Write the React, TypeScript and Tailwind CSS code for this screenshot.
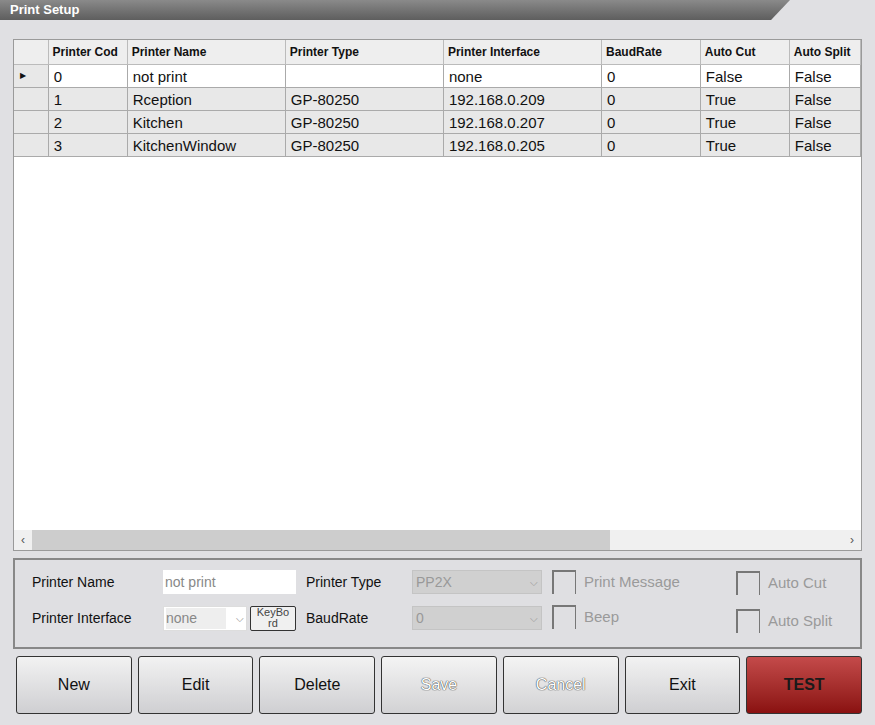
import React from "react";

const cols = [
  { w: "w-[80px]", label: "Printer Cod" },
  { w: "w-[160px]", label: "Printer Name" },
  { w: "w-[160px]", label: "Printer Type" },
  { w: "w-[160px]", label: "Printer Interface" },
  { w: "w-[100px]", label: "BaudRate" },
  { w: "w-[90px]", label: "Auto Cut" },
  { w: "w-[72px]", label: "Auto Split" },
];

const rows = [
  ["0", "not print", "", "none", "0", "False", "False"],
  ["1", "Rception", "GP-80250", "192.168.0.209", "0", "True", "False"],
  ["2", "Kitchen", "GP-80250", "192.168.0.207", "0", "True", "False"],
  ["3", "KitchenWindow", "GP-80250", "192.168.0.205", "0", "True", "False"],
];

function Btn({ label, kind }: { label: string; kind?: "light" | "red" }) {
  const base =
    "h-[58px] flex-1 rounded-[3px] border border-[#333] flex items-center justify-center text-[16px]";
  if (kind === "red")
    return (
      <div className={`${base} bg-gradient-to-b from-[#c44a4a] to-[#8a1010] font-bold text-[#1a1a1a]`}>
        {label}
      </div>
    );
  if (kind === "light")
    return (
      <div
        className={`${base} bg-gradient-to-b from-[#f4f4f4] to-[#d2d2d4] text-white [text-shadow:0_0_1px_#333,0_0_1px_#333]`}
      >
        {label}
      </div>
    );
  return (
    <div className={`${base} bg-gradient-to-b from-[#f2f2f2] to-[#cfcfd2] text-[#111]`}>{label}</div>
  );
}

function Check({ label }: { label: string }) {
  return (
    <div className="flex items-center gap-2">
      <div className="h-[24px] w-[24px] border-l-2 border-t-2 border-r border-[#777]" />
      <span className="text-[15px] text-[#9a9a9a]">{label}</span>
    </div>
  );
}

export default function App() {
  return (
    <div
      className="w-[875px] h-[725px] bg-[#e0e0e3] flex flex-col overflow-hidden"
      style={{ fontFamily: '"Liberation Sans", Arial, sans-serif' }}
    >
      {/* title */}
      <div className="relative h-[20px] shrink-0">
        <div className="h-[20px] w-[790px] bg-gradient-to-b from-[#8a8a8a] to-[#5e5e5e] [clip-path:polygon(0_0,100%_0,97.6%_100%,0_100%)] pl-[10px] text-[13px] font-bold text-white leading-[20px]">
          Print Setup
        </div>
      </div>
      <div className="flex-1 flex flex-col px-[13px] pt-[19px] gap-[7px]">
        {/* grid */}
        <div className="h-[512px] bg-white border border-[#9a9a9a] flex flex-col text-[15px] text-[#111]">
          <div className="flex h-[25px] bg-[#eeeeee] border-b border-[#bbb] text-[12px] font-bold">
            <div className="w-[35px] border-r border-[#bbb]" />
            {cols.map((c) => (
              <div key={c.label} className={`${c.w} border-r border-[#bbb] px-[4px] pt-[3px] whitespace-nowrap overflow-hidden`}>
                {c.label}
              </div>
            ))}
          </div>
          {rows.map((r, i) => (
            <div key={i} className={`flex h-[23px] border-b border-[#aaa] ${i === 0 ? "bg-white" : "bg-[#e8e8e8]"}`}>
              <div className="w-[35px] border-r border-[#aaa] bg-[#e8e8e8] flex items-center pl-[6px]">
                {i === 0 && <span className="text-[8px]">▶</span>}
              </div>
              {r.map((v, j) => (
                <div key={j} className={`${cols[j].w} border-r border-[#aaa] px-[5px] leading-[23px] whitespace-nowrap overflow-hidden`}>
                  {v}
                </div>
              ))}
            </div>
          ))}
          <div className="flex-1" />
          <div className="h-[20px] flex items-center bg-[#f0f0f0] text-[#555] text-[12px]">
            <span className="w-[18px] text-center">‹</span>
            <div className="w-[578px] h-full bg-[#cdcdcd]" />
            <div className="flex-1" />
            <span className="w-[18px] text-center">›</span>
          </div>
        </div>
        {/* edit panel */}
        <div className="h-[91px] border-2 border-[#888] bg-[#dfdfe2] flex text-[14px] text-[#111] px-[17px] pt-[10px]">
          <div className="flex flex-col gap-[12px] w-[131px]">
            <div className="h-[24px] leading-[24px]">Printer Name</div>
            <div className="h-[24px] leading-[24px]">Printer Interface</div>
          </div>
          <div className="flex flex-col gap-[12px] w-[143px]">
            <div className="h-[24px] w-[133px] bg-white px-[2px] leading-[24px] text-[#888]">not print</div>
            <div className="flex gap-[3px]">
              <div className="h-[25px] w-[84px] bg-white border border-[#ddd] flex items-center justify-between px-[2px] text-[#888]">
                <span className="bg-[#eee] w-[60px]">none</span>
                <span className="text-[10px]">⌵</span>
              </div>
              <div className="h-[25px] w-[46px] border border-[#333] rounded-[2px] bg-[#f0f0f0] text-[11px] leading-[11px] text-center text-[#444]">
                KeyBo<br />rd
              </div>
            </div>
          </div>
          <div className="flex flex-col gap-[12px] w-[106px]">
            <div className="h-[24px] leading-[24px]">Printer Type</div>
            <div className="h-[24px] leading-[24px]">BaudRate</div>
          </div>
          <div className="flex flex-col gap-[12px] w-[140px]">
            <div className="h-[24px] w-[130px] bg-[#d0d0d0] border border-[#c4c4c4] flex justify-between items-center px-[3px] text-[#999]">
              <span>PP2X</span><span className="text-[10px]">⌵</span>
            </div>
            <div className="h-[24px] w-[130px] bg-[#d0d0d0] border border-[#c4c4c4] flex justify-between items-center px-[3px] text-[#999]">
              <span>0</span><span className="text-[10px]">⌵</span>
            </div>
          </div>
          <div className="flex flex-col gap-[11px] w-[184px]">
            <Check label="Print Message" />
            <Check label="Beep" />
          </div>
          <div className="flex flex-col gap-[14px] pt-[1px]">
            <Check label="Auto Cut" />
            <Check label="Auto Split" />
          </div>
        </div>
        {/* buttons */}
        <div className="flex gap-[6px] pl-[3px]">
          <Btn label="New" />
          <Btn label="Edit" />
          <Btn label="Delete" />
          <Btn label="Save" kind="light" />
          <Btn label="Cancel" kind="light" />
          <Btn label="Exit" />
          <Btn label="TEST" kind="red" />
        </div>
      </div>
    </div>
  );
}
